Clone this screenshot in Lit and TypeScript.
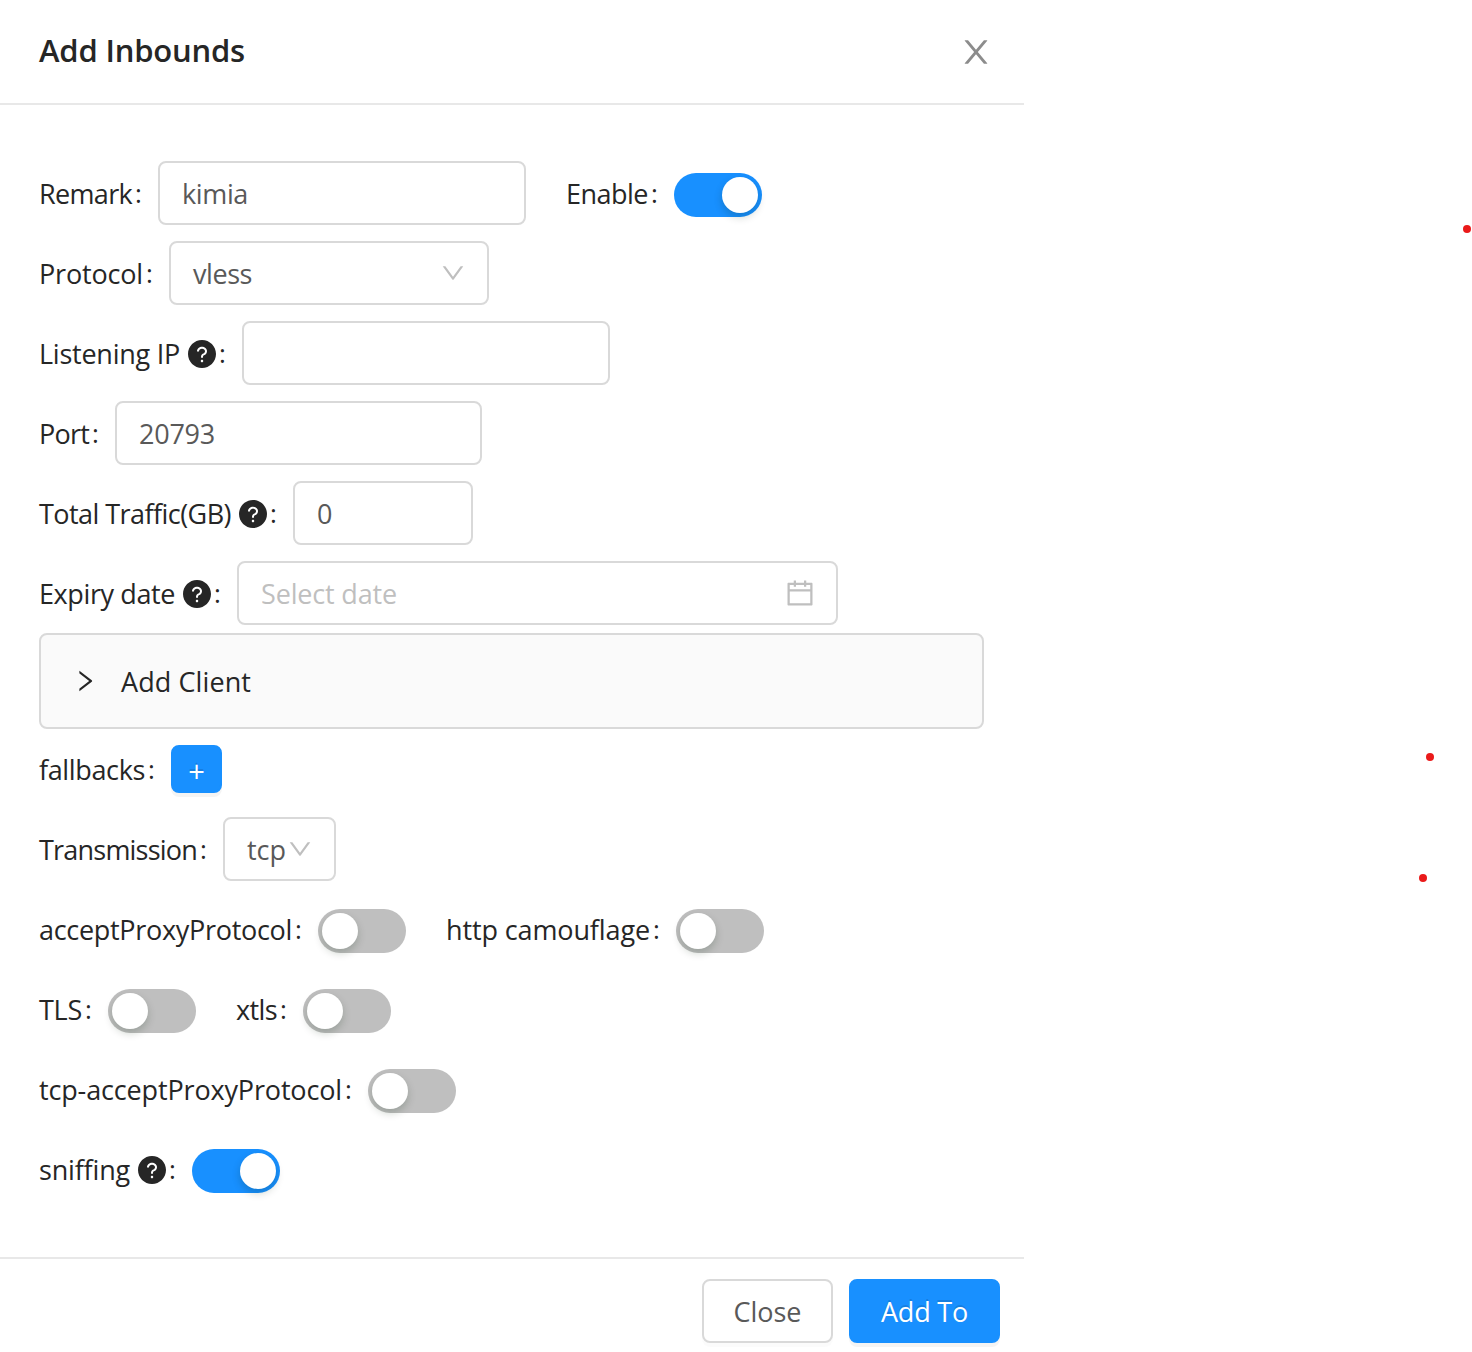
import { LitElement, html, css, svg, nothing } from "lit";
import { customElement, property } from "lit/decorators.js";

const ICONS: Record<string, string> = {
  close:
    "M563.8 512l262.5-312.9c4.4-5.2.7-13.1-6.1-13.1h-79.8c-4.7 0-9.2 2.1-12.3 5.7L511.6 449.8 295.1 191.7c-3-3.6-7.5-5.7-12.3-5.7H203c-6.8 0-10.5 7.9-6.1 13.1L459.4 512 196.9 824.9A7.95 7.95 0 0 0 203 838h79.8c4.7 0 9.2-2.1 12.3-5.7l216.5-258.1 216.5 258.1c3 3.6 7.5 5.7 12.3 5.7h79.8c6.8 0 10.5-7.9 6.1-13.1L563.8 512z",
  calendar:
    "M880 184H712v-64c0-4.4-3.6-8-8-8h-56c-4.4 0-8 3.6-8 8v64H384v-64c0-4.4-3.6-8-8-8h-56c-4.4 0-8 3.6-8 8v64H144c-17.7 0-32 14.3-32 32v664c0 17.7 14.3 32 32 32h736c17.7 0 32-14.3 32-32V216c0-17.7-14.3-32-32-32zm-40 656H184V460h656v380zM184 392V256h128v48c0 4.4 3.6 8 8 8h56c4.4 0 8-3.6 8-8v-48h256v48c0 4.4 3.6 8 8 8h56c4.4 0 8-3.6 8-8v-48h128v136H184z",
  question:
    "M512 64C264.6 64 64 264.6 64 512s200.6 448 448 448 448-200.6 448-448S759.4 64 512 64zm0 708c-22.1 0-40-17.9-40-40s17.9-40 40-40 40 17.9 40 40-17.9 40-40 40zm62.9-219.5a48.3 48.3 0 0 0-30.9 44.8V620c0 4.4-3.6 8-8 8h-48c-4.4 0-8-3.6-8-8v-21.5c0-23.1 6.7-45.9 19.9-64.9 12.9-18.6 30.9-32.8 52.1-40.9 34-13.1 56-41.6 56-72.7 0-44.1-43.1-80-96-80s-96 35.9-96 80v7.6c0 4.4-3.6 8-8 8h-48c-4.4 0-8-3.6-8-8V420c0-39.3 17.2-76 48.4-103.3C430.4 290.4 470 276 512 276s81.6 14.5 111.6 40.7C654.8 344 672 380.7 672 420c0 57.8-38.1 109.8-97.1 132.5z",
  down:
    "M884 256h-75c-5.1 0-9.9 2.5-12.9 6.6L512 654.2 227.9 262.6c-3-4.1-7.8-6.6-12.9-6.6h-75c-6.5 0-10.3 7.4-6.5 12.7l352.6 486.1c12.8 17.6 39 17.6 51.7 0l352.6-486.1c3.9-5.3.1-12.7-6.4-12.7z",
  right:
    "M765.7 486.8L314.9 134.7A7.97 7.97 0 0 0 302 141v77.3c0 4.9 2.3 9.6 6.1 12.6l360 281.1-360 281.1c-3.9 3-6.1 7.7-6.1 12.6V883c0 6.7 7.7 10.4 12.9 6.3l450.8-352.1a31.96 31.96 0 0 0 0-50.4z",
};

@customElement("ui-icon")
class UiIcon extends LitElement {
  @property() name = "";
  static styles = css`
    :host { display: block; flex: none; width: 28px; height: 28px; }
    svg { display: block; width: 100%; height: 100%; fill: currentColor; }
  `;
  render() {
    return html`<svg viewBox="64 64 896 896" aria-hidden="true">${svg`<path d=${ICONS[this.name]}></path>`}</svg>`;
  }
}

/* A single line of text tracked so that it fills exactly the given advance. */
@customElement("ui-text")
class UiText extends LitElement {
  @property({ type: Number }) advance = 0;
  @property() text = "";
  static styles = css`
    :host { display: block; flex: none; padding-top: 2px; white-space: pre; }
    .line { display: inline-block; }
  `;
  render() {
    return html`<span class="line">${this.text}</span>`;
  }
  firstUpdated() {
    const line = this.renderRoot.querySelector<HTMLElement>(".line")!;
    const spare = this.advance - line.getBoundingClientRect().width;
    line.style.letterSpacing = `${spare / this.text.length}px`;
  }
}

@customElement("ui-switch")
class UiSwitch extends LitElement {
  @property({ type: Boolean, reflect: true }) checked = false;
  static styles = css`
    :host {
      display: flex; flex: none; box-sizing: border-box; width: 88px; height: 44px;
      margin-top: 4px; padding: 4px; border-radius: 22px; background: #bfbfbf;
    }
    :host([checked]) { justify-content: flex-end; background: #1890ff; }
    .knob {
      width: 36px; height: 36px; border-radius: 50%; background: #fff;
      box-shadow: 0 4px 8px rgba(0, 35, 11, 0.2);
    }
  `;
  render() {
    return html`<div class="knob"></div>`;
  }
}

@customElement("app-root")
class AppRoot extends LitElement {
  static styles = css`
    :host {
      display: block; position: relative; width: 1472px; height: 1352px; overflow: hidden;
      background: #fff; color: #262626;
      font: 400 27px/42px "Open Sans", "Noto Sans", sans-serif;
    }
    .modal { display: flex; flex-direction: column; width: 1024px; }
    .header {
      display: flex; justify-content: space-between; align-items: center; box-sizing: border-box;
      height: 105px; padding: 1px 30px 0 39px; border-bottom: 2px solid #e8e8e8;
    }
    .title { font-size: 31px; font-weight: 600; line-height: 44px; margin-top: -7px; }
    .close { width: 36px; height: 32px; display: flex; justify-content: center; color: #8c8c8c; }
    .close ui-icon { width: 32px; height: 32px; }
    .body { display: flex; flex-direction: column; gap: 16px; padding: 56px 40px 56px 39px; }
    .row { display: flex; align-items: center; height: 64px; gap: 40px; }
    .item { display: flex; align-items: center; }
    .item ui-icon { margin: 2px 0 0 8px; }
    .colon { width: 7px; margin: 0 16px 0 3px; font-size: 26px; }
    .field {
      display: flex; align-items: center; justify-content: space-between; box-sizing: border-box;
      height: 64px; padding: 0 22px; border: 2px solid #d9d9d9; border-radius: 8px; color: #595959;
    }
    .w368 { width: 368px; }
    .w367 { width: 367px; }
    .w320 { width: 320px; }
    .w180 { width: 180px; }
    .w601 { width: 601px; }
    .w113 { width: 113px; }
    .field ui-icon { margin: 0; color: #bfbfbf; }
    .field .arrow { width: 24px; height: 24px; }
    .placeholder { color: #bfbfbf; }
    .panel {
      display: flex; align-items: center; gap: 24px; box-sizing: border-box; height: 96px;
      margin: -8px 0; padding: 0 32px; border: 2px solid #d9d9d9; border-radius: 8px; background: #fafafa;
    }
    .panel ui-icon { width: 24px; height: 24px; }
    .btn {
      display: flex; align-items: center; justify-content: center; box-sizing: border-box; height: 64px;
      border: 2px solid #d9d9d9; border-radius: 8px; color: #595959; background: #fff;
      box-shadow: 0 4px 0 rgba(0, 0, 0, 0.016);
    }
    .primary {
      border-color: #1890ff; background: #1890ff; color: #fff;
      text-shadow: 0 -2px 0 rgba(0, 0, 0, 0.12); box-shadow: 0 4px 0 rgba(0, 0, 0, 0.045);
    }
    .plus { width: 51px; height: 48px; padding-top: 4px; font-size: 29px; }
    .btn-close { width: 131px; }
    .btn-add { width: 151px; }
    .footer {
      display: flex; justify-content: flex-end; gap: 16px; padding: 20px 24px;
      border-top: 2px solid #e8e8e8;
    }
    .dot { position: absolute; width: 8px; height: 8px; border-radius: 50%; background: #ea1a1a; }
    .dot-a { left: 1463px; top: 225.4px; }
    .dot-b { left: 1426.4px; top: 753px; }
    .dot-c { left: 1418.8px; top: 873.7px; }
  `;

  private item(text: string, advance: number, control: unknown, help = false) {
    return html`<div class="item">
      <ui-text text=${text} advance=${advance}></ui-text>
      ${help ? html`<ui-icon name="question"></ui-icon>` : nothing}
      <span class="colon">:</span>${control}
    </div>`;
  }

  private field(size: string, text: string, advance: number, arrow = false) {
    return html`<div class="field ${size}">
      ${text ? html`<ui-text text=${text} advance=${advance}></ui-text>` : nothing}
      ${arrow ? html`<ui-icon class="arrow" name="down"></ui-icon>` : nothing}
    </div>`;
  }

  render() {
    const off = html`<ui-switch></ui-switch>`;
    const on = html`<ui-switch checked></ui-switch>`;
    return html`
      <div class="modal">
        <div class="header">
          <ui-text class="title" text="Add Inbounds" advance="206"></ui-text>
          <div class="close"><ui-icon name="close"></ui-icon></div>
        </div>
        <div class="body">
          <div class="row">
            ${this.item("Remark", 93, this.field("w368", "kimia", 66))}
            ${this.item("Enable", 82, on)}
          </div>
          <div class="row">${this.item("Protocol", 104, this.field("w320", "vless", 59, true))}</div>
          <div class="row">${this.item("Listening IP", 141, this.field("w368", "", 0), true)}</div>
          <div class="row">${this.item("Port", 50, this.field("w367", "20793", 76))}</div>
          <div class="row">${this.item("Total Traffic(GB)", 192, this.field("w180", "0", 15), true)}</div>
          <div class="row">
            ${this.item(
              "Expiry date",
              136,
              html`<div class="field w601">
                <ui-text class="placeholder" text="Select date" advance="136"></ui-text>
                <ui-icon name="calendar"></ui-icon>
              </div>`,
              true
            )}
          </div>
          <div class="panel">
            <ui-icon name="right"></ui-icon>
            <ui-text text="Add Client" advance="130"></ui-text>
          </div>
          <div class="row">${this.item("fallbacks", 106, html`<div class="btn primary plus">+</div>`)}</div>
          <div class="row">${this.item("Transmission", 158, this.field("w113", "tcp", 39, true))}</div>
          <div class="row">
            ${this.item("acceptProxyProtocol", 253, off)} ${this.item("http camouflage", 204, off)}
          </div>
          <div class="row">${this.item("TLS", 43, off)} ${this.item("xtls", 41, off)}</div>
          <div class="row">${this.item("tcp-acceptProxyProtocol", 303, off)}</div>
          <div class="row">${this.item("sniffing", 91, on, true)}</div>
        </div>
        <div class="footer">
          <div class="btn btn-close"><ui-text text="Close" advance="68"></ui-text></div>
          <div class="btn primary btn-add"><ui-text text="Add To" advance="87"></ui-text></div>
        </div>
      </div>
      <span class="dot dot-a"></span>
      <span class="dot dot-b"></span>
      <span class="dot dot-c"></span>
    `;
  }
}
